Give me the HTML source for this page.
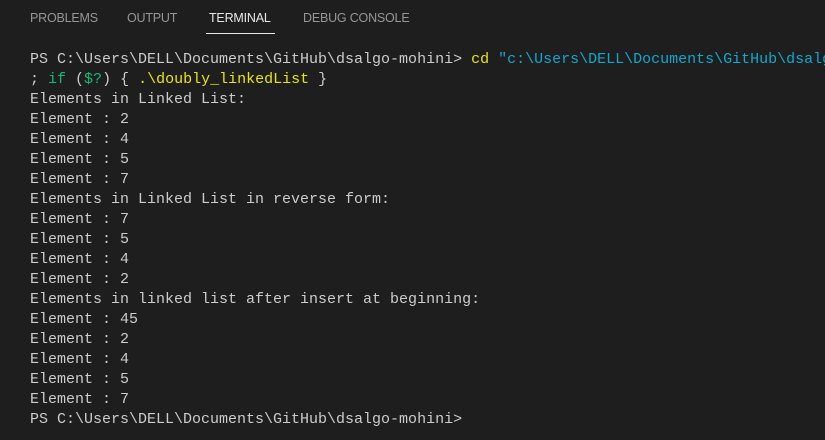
<!DOCTYPE html>
<html><head><style>
body{margin:0;width:825px;height:440px;background:#1e1e1e;overflow:hidden;position:relative}
.tab{position:absolute;top:11px;font:12.5px "Liberation Sans",sans-serif;color:#969696;letter-spacing:-0.2px}
.ul{position:absolute;left:206px;top:33px;width:69px;height:1px;background:#e7e7e7}
pre{position:absolute;left:30px;top:50px;margin:0;font:15px/20px "Liberation Mono",monospace;color:#cccccc;white-space:pre}
.y{color:#e5e510}.g{color:#0dbc79}.c{color:#11a8cd}
</style></head><body>
<div class="tab" style="left:30px">PROBLEMS</div>
<div class="tab" style="left:127px">OUTPUT</div>
<div class="tab" style="left:209px;color:#e7e7e7">TERMINAL</div>
<div class="tab" style="left:303px">DEBUG CONSOLE</div>
<div class="ul"></div>
<pre>PS C:\Users\DELL\Documents\GitHub\dsalgo-mohini&gt; <span class="y">cd</span> <span class="c">"c:\Users\DELL\Documents\GitHub\dsalg</span>
; <span class="g">if</span> (<span class="g">$?</span>) { <span class="y">.\doubly_linkedList</span> }
Elements in Linked List:
Element : 2
Element : 4
Element : 5
Element : 7
Elements in Linked List in reverse form:
Element : 7
Element : 5
Element : 4
Element : 2
Elements in linked list after insert at beginning:
Element : 45
Element : 2
Element : 4
Element : 5
Element : 7
PS C:\Users\DELL\Documents\GitHub\dsalgo-mohini&gt;</pre>
</body></html>
